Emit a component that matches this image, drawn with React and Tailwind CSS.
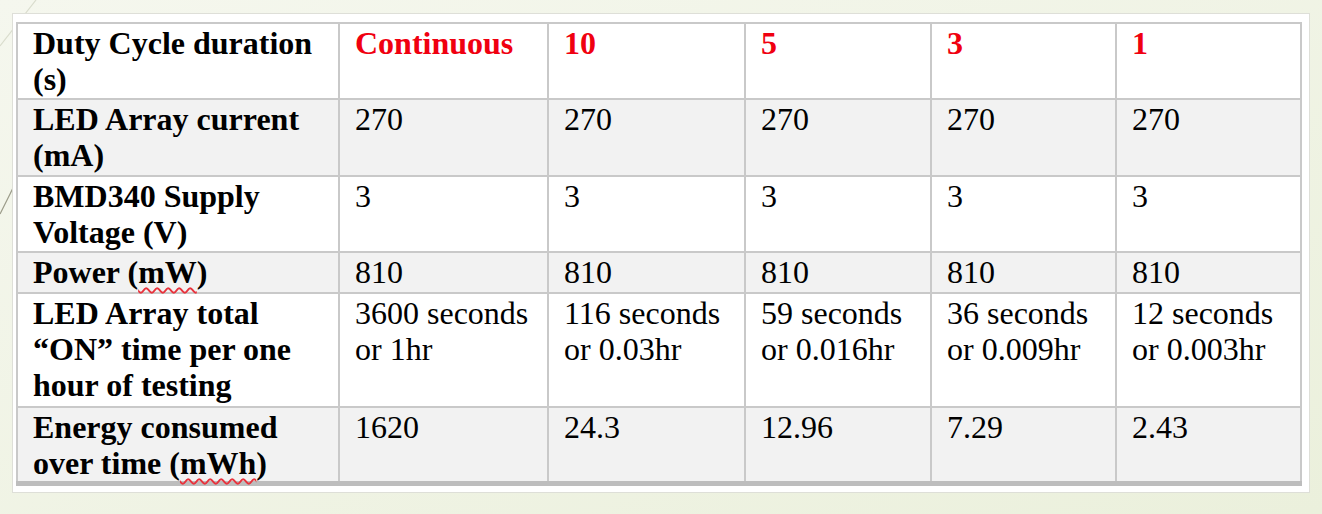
import React from "react";

const cols = ["w-[322px]", "w-[209px]", "w-[197px]", "w-[186px]", "w-[185px]", "w-[185px]"];

const Spell = ({ children }) => (
  <span className="underline decoration-wavy decoration-[#e8323c] decoration-[1.5px] underline-offset-[4px]">
    {children}
  </span>
);

const rows = [
  {
    h: "h-[76px]",
    bg: "bg-white",
    label: <>Duty Cycle duration (s)</>,
    values: ["Continuous", "10", "5", "3", "1"],
    red: true,
  },
  {
    h: "h-[77px]",
    bg: "bg-[#f2f2f2]",
    label: <>LED Array current (mA)</>,
    values: ["270", "270", "270", "270", "270"],
  },
  {
    h: "h-[76px]",
    bg: "bg-white",
    label: <>BMD340 Supply Voltage (V)</>,
    values: ["3", "3", "3", "3", "3"],
  },
  {
    h: "h-[41px]",
    bg: "bg-[#f2f2f2]",
    label: (
      <>
        Power (<Spell>mW</Spell>)
      </>
    ),
    values: ["810", "810", "810", "810", "810"],
  },
  {
    h: "h-[114px]",
    bg: "bg-white",
    label: <>LED Array total “ON” time per one hour of testing</>,
    values: [
      "3600 seconds or 1hr",
      "116 seconds or 0.03hr",
      "59 seconds or 0.016hr",
      "36 seconds or 0.009hr",
      "12 seconds or 0.003hr",
    ],
  },
  {
    h: "h-[76px]",
    bg: "bg-[#f2f2f2]",
    label: (
      <>
        Energy consumed over time (<Spell>mWh</Spell>)
      </>
    ),
    values: ["1620", "24.3", "12.96", "7.29", "2.43"],
  },
];

const App = () => {
  return (
    <div className="relative w-[1322px] h-[514px] overflow-hidden bg-gradient-to-br from-[#f5f7ee] to-[#ebf0dc] pt-[13px] pl-[12px]">
      {/* background strokes */}
      <svg className="absolute left-0 top-0" width="60" height="240" viewBox="0 0 60 240">
        <line x1="36" y1="0" x2="0" y2="46" stroke="#d9dccd" strokeWidth="1.2" />
        <line x1="14" y1="186" x2="0" y2="214" stroke="#9a9a88" strokeWidth="1.2" />
      </svg>
      <div className="relative w-[1298px] h-[480px] bg-white border border-[#dedfd8] pt-[8px] pl-[3px]">
        <table className="table-fixed border-collapse font-['Liberation_Serif','Times_New_Roman',serif] text-[32px] leading-[36px] text-black">
          <colgroup>
            {cols.map((c, i) => (
              <col key={i} className={c} />
            ))}
          </colgroup>
          <tbody>
            {rows.map((r, i) => (
              <tr
                key={i}
                className={`${r.h} ${r.bg} ${
                  i === rows.length - 1 ? "border-b-[5px] border-b-[#bdbdbd]" : ""
                }`}
              >
                <td className="border-2 border-[#c9c9c9] align-top pl-[15px] pr-2 pt-[1px] font-bold">
                  {r.label}
                </td>
                {r.values.map((v, j) => (
                  <td
                    key={j}
                    className={`border-2 border-[#c9c9c9] align-top pl-[15px] pr-1 pt-[1px] ${
                      r.red ? "font-bold text-[#f00010]" : ""
                    }`}
                  >
                    {v}
                  </td>
                ))}
              </tr>
            ))}
          </tbody>
        </table>
      </div>
    </div>
  );
};

export default App;
